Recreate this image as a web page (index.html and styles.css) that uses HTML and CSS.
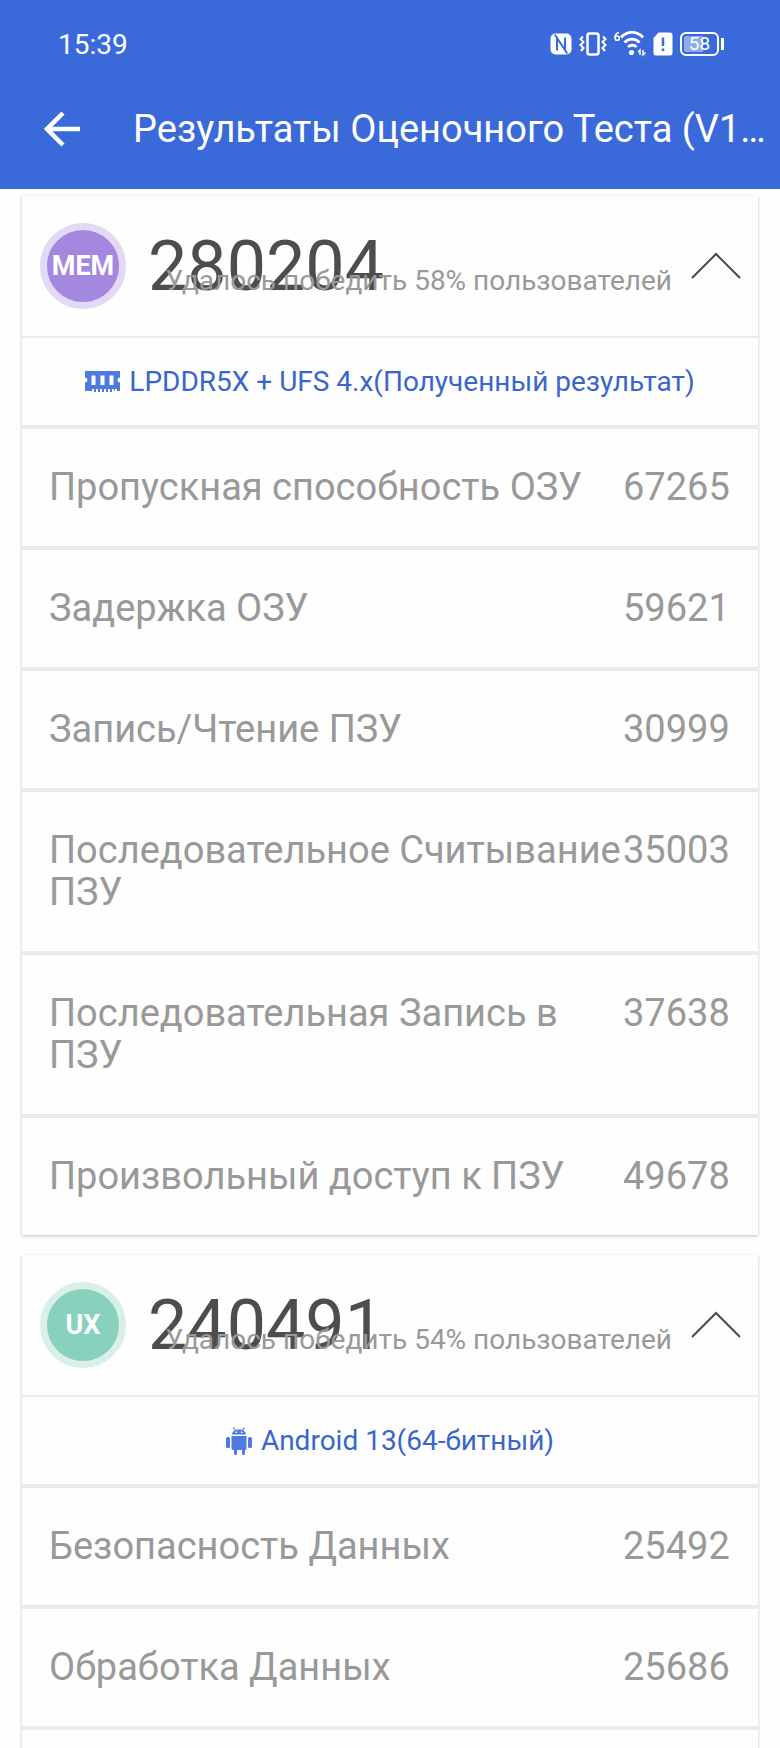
FILE: index.html
```html
<!DOCTYPE html>
<html lang="ru">
<head>
    <meta charset="UTF-8">
    <meta name="viewport" content="width=device-width, initial-scale=1.0">
    <title>Результаты Оценочного Теста</title>
    <link rel="stylesheet" href="styles.css">
</head>
<body>
    <header class="app-header">
        <div class="status-bar">
            <time>15:39</time>
            <div class="status-icons">
                <!-- NFC -->
                <svg width="22" height="24" viewBox="0 0 22 24">
                    <rect x="0.5" y="1.5" width="21" height="21" rx="5" fill="#fff"/>
                    <path d="M7 18.500V6l8 12V5.500" fill="none" stroke="#3a6ad9" stroke-width="2"/>
                    <path d="M7 6L4.500 2.500M15 18l2.500 3.500" fill="none" stroke="#3a6ad9" stroke-width="1.500"/>
                </svg>
                <!-- vibration -->
                <svg width="28" height="24" viewBox="0 0 28 24" fill="none" stroke="#fff">
                    <rect x="8.500" y="1.500" width="11" height="21" rx="2" stroke-width="2.500"/>
                    <path d="M4 4.500L1.500 7 4.500 10 1.500 13 4.500 16 2 19M24 4.500L26.500 7 23.500 10 26.500 13 23.500 16 26 19" stroke-width="2"/>
                </svg>
                <!-- wifi -->
                <svg width="32" height="26" viewBox="0 0 32 26" fill="none" stroke="#fff">
                    <path d="M5 1.500C2 2 1 4.500 1 7" stroke-width="1.500"/>
                    <circle cx="3.200" cy="7.200" r="2.100" stroke-width="1.500"/>
                    <path d="M7 6.500a14.500 14.500 0 0 1 22 0M10.500 11.500a10 10 0 0 1 15 0M14 16a6 6 0 0 1 8.500 0" stroke-width="2.800"/>
                    <circle cx="17.500" cy="21.500" r="2.600" fill="#fff" stroke="none"/>
                    <path d="M26 24v-5l-2 2M29 19v5l2.500-2.500" stroke-width="1.500"/>
                </svg>
                <!-- sim alert -->
                <svg width="20" height="24" viewBox="0 0 20 24">
                    <path d="M5.500 0.500H17a2.500 2.500 0 0 1 2.500 2.500v18a2.500 2.500 0 0 1-2.500 2.500H3A2.500 2.500 0 0 1 .5 21V6z" fill="#fff"/>
                    <path d="M10 5.500v8.500M10 16.500v2.500" stroke="#3a6ad9" stroke-width="2.500"/>
                </svg>
                <div class="battery">58</div>
            </div>
        </div>
        <div class="title-bar">
            <button class="back" type="button" aria-label="Назад">
                <svg width="36" height="36" viewBox="0 0 36 36" fill="none" stroke="#fff" stroke-width="4.500">
                    <path d="M19 2L3 18l16 16M3 18h33"/>
                </svg>
            </button>
            <h1>Результаты Оценочного Теста (V1…</h1>
        </div>
    </header>

    <main>
        <section class="card">
            <div class="card-head">
                <span class="badge badge-mem">MEM</span>
                <h2 class="score">280204</h2>
                <p class="rank">Удалось победить 58% пользователей</p>
                <button class="toggle" type="button" aria-label="Свернуть" aria-expanded="true">
                    <svg width="50" height="28" viewBox="0 0 50 28" fill="none" stroke="#4a4a4a" stroke-width="2">
                        <path d="M1 26L25 2l24 24"/>
                    </svg>
                </button>
            </div>
            <p class="device">
                <svg width="35" height="21" viewBox="0 0 35 21" fill="#4f7be0">
                    <path fill-rule="evenodd" d="M0 0h35v6.500a2.500 2.500 0 0 0 0 5V20h-3v-2h-2v2h-1v-2h-2v3h-2v-3h-2v3h-2v-3h-2v3h-2v-3h-2v3h-2v-3h-2v3H9v-3H7v2H0v-8.500a2.500 2.500 0 0 0 0-5zM6.500 4.500v9.500h4V4.500zM15.500 4.500v9.500h4V4.500zM24.500 4.500v9.500h4V4.500z"/>
                </svg>
                LPDDR5X + UFS 4.x(Полученный результат)
            </p>
            <table>
                <tr><th scope="row">Пропускная способность ОЗУ</th><td>67265</td></tr>
                <tr><th scope="row">Задержка ОЗУ</th><td>59621</td></tr>
                <tr><th scope="row">Запись/Чтение ПЗУ</th><td>30999</td></tr>
                <tr><th scope="row">Последовательное Считывание ПЗУ</th><td>35003</td></tr>
                <tr><th scope="row">Последовательная Запись в ПЗУ</th><td>37638</td></tr>
                <tr><th scope="row">Произвольный доступ к ПЗУ</th><td>49678</td></tr>
            </table>
        </section>

        <section class="card">
            <div class="card-head">
                <span class="badge badge-ux">UX</span>
                <h2 class="score">240491</h2>
                <p class="rank">Удалось победить 54% пользователей</p>
                <button class="toggle" type="button" aria-label="Свернуть" aria-expanded="true">
                    <svg width="50" height="28" viewBox="0 0 50 28" fill="none" stroke="#4a4a4a" stroke-width="2">
                        <path d="M1 26L25 2l24 24"/>
                    </svg>
                </button>
            </div>
            <p class="device">
                <svg width="26" height="28" viewBox="0 0 26 28" fill="#4f7be0">
                    <rect x="0" y="10" width="4" height="11" rx="1.500"/>
                    <rect x="22" y="10" width="4" height="11" rx="1.500"/>
                    <path d="M5.500 9h15v12.500a1.500 1.500 0 0 1-1.500 1.500v3.500a1.500 1.500 0 0 1-3 0V23h-5v3.500a1.500 1.500 0 0 1-3 0V23H7a1.500 1.500 0 0 1-1.500-1.500z"/>
                    <path fill-rule="evenodd" d="M6 7.500C6 5 8.500 2.500 13 2.500S20 5 20 7.500zM9.500 4.500v1.500H11V4.500zM15 4.500v1.500h1.500V4.500z"/>
                    <path d="M9.500 4L7.500.5M16.500 4l2-3.500" stroke="#4f7be0" stroke-width="1.200"/>
                </svg>
                Android 13(64-битный)
            </p>
            <table>
                <tr><th scope="row">Безопасность Данных</th><td>25492</td></tr>
                <tr><th scope="row">Обработка Данных</th><td>25686</td></tr>
                <tr><th></th><td></td></tr>
            </table>
        </section>
    </main>
</body>
</html>
```
FILE: styles.css
```css
* {
    box-sizing: border-box;
}
body {
    display: flex;
    flex-direction: column;
    height: 100vh;
    margin: 0;
    overflow: hidden;
    font-family: Roboto, "Noto Sans", sans-serif;
    color: #999;
    background: #fefefe;
}
h1, h2, p {
    margin: 0;
    font-weight: 400;
}
button {
    padding: 0;
    border: none;
    background: none;
    cursor: pointer;
}
svg {
    display: block;
    flex: none;
}

/* header */
.app-header {
    flex: none;
    color: #fff;
    background: #3a6ad9;
}
.status-bar {
    display: flex;
    align-items: center;
    justify-content: space-between;
    height: 88px;
    padding: 0 56px 0 58px;
    font-size: 28px;
}
.status-icons {
    display: flex;
    align-items: center;
    gap: 7px;
}
.battery {
    position: relative;
    width: 39px;
    height: 24px;
    margin-right: 5px;
    padding: 2px;
    border: 2px solid #fff;
    border-radius: 6px;
    font-size: 19px;
    line-height: 16px;
    text-align: center;
    background: linear-gradient(90deg, #8fabea 60%, transparent 60%) content-box;
}
.battery::after {
    content: "";
    position: absolute;
    top: 4px;
    right: -7px;
    width: 3px;
    height: 12px;
    background: #fff;
}
.title-bar {
    display: flex;
    align-items: center;
    gap: 53px;
    height: 101px;
    padding: 0 10px 20px 44px;
}
h1 {
    flex: 1;
    font-size: 38px;
    line-height: 44px;
    white-space: nowrap;
}

/* cards */
main {
    flex: 1;
    min-height: 0;
    padding: 7px 22px 0;
    overflow: hidden;
}
.card {
    margin-bottom: 20px;
    background: #fefefe;
    box-shadow: 0 1px 3px rgba(0, 0, 0, 0.25);
}
.card-head {
    position: relative;
    display: flex;
    align-items: center;
    height: 142px;
    padding: 0 17px 0 18px;
    border-bottom: 2px solid #ebebeb;
}
.badge {
    width: 86px;
    height: 86px;
    border: 7px solid;
    border-radius: 50%;
    font-size: 27px;
    font-weight: 700;
    line-height: 72px;
    text-align: center;
    color: #fff;
}
.badge-mem {
    border-color: #e2daf5;
    background: #a488e0;
}
.badge-ux {
    border-color: #d8f0e9;
    background: #88d1bd;
}
.score {
    margin-left: 22px;
    font-size: 70px;
    line-height: 80px;
    color: #4d4d4d;
}
.rank {
    position: absolute;
    right: 86px;
    bottom: 39px;
    font-size: 28px;
    line-height: 32px;
}
.toggle {
    margin-left: auto;
}
.device {
    display: flex;
    align-items: center;
    justify-content: center;
    gap: 9px;
    height: 87px;
    font-size: 28px;
    color: #3a66cc;
}
table {
    width: 100%;
    border-spacing: 0;
}
th,
td {
    height: 121px;
    padding: 37px 0 38px;
    border-top: 4px solid #ebebeb;
    font-size: 38px;
    font-weight: 400;
    line-height: 42px;
    text-align: left;
    vertical-align: top;
}
th {
    padding-left: 27px;
}
td {
    width: 135px;
    padding-right: 27px;
}
```
